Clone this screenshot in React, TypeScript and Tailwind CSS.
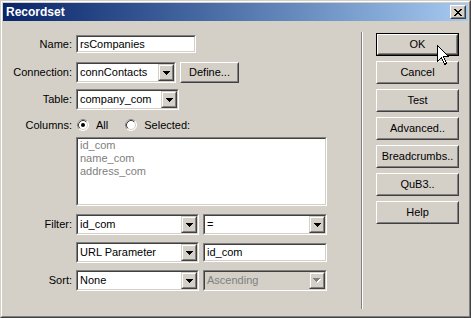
import React from "react";

const FONT = { fontFamily: '"Liberation Sans", Arial, sans-serif' };

function Sunken({ className, innerClass, children }: { className: string; innerClass?: string; children?: React.ReactNode }) {
  return (
    <div className={`border border-t-[#808080] border-l-[#808080] border-r-white border-b-white ${className}`}>
      <div className={`h-full border border-t-[#404040] border-l-[#404040] border-r-[#d4d0c8] border-b-[#d4d0c8] ${innerClass ?? "bg-white"}`}>
        {children}
      </div>
    </div>
  );
}

function Triangle({ color }: { color: string }) {
  return (
    <svg width="7" height="4" viewBox="0 0 7 4" shapeRendering="crispEdges">
      <rect x="0" y="0" width="7" height="1" fill={color} />
      <rect x="1" y="1" width="5" height="1" fill={color} />
      <rect x="2" y="2" width="3" height="1" fill={color} />
      <rect x="3" y="3" width="1" height="1" fill={color} />
    </svg>
  );
}

function ArrowBtn({ disabled }: { disabled?: boolean }) {
  return (
    <div className="w-[16px] h-full shrink-0 border border-t-[#d4d0c8] border-l-[#d4d0c8] border-r-[#404040] border-b-[#404040]">
      <div className="h-full border border-t-white border-l-white border-r-[#808080] border-b-[#808080] bg-[#d4d0c8] flex items-center justify-center">
        {disabled ? (
          <div className="relative w-[8px] h-[5px]">
            <div className="absolute left-[1px] top-[1px]"><Triangle color="#ffffff" /></div>
            <div className="absolute left-0 top-0"><Triangle color="#808080" /></div>
          </div>
        ) : (
          <Triangle color="#000000" />
        )}
      </div>
    </div>
  );
}

function Combo({ className, text, disabled }: { className: string; text: string; disabled?: boolean }) {
  return (
    <Sunken className={`h-[21px] ${className}`} innerClass={disabled ? "bg-[#d4d0c8]" : "bg-white"}>
      <div className="flex h-full items-center">
        <span className={`flex-1 pl-[2px] whitespace-nowrap overflow-hidden ${disabled ? "text-[#808080]" : "text-black"}`}>{text}</span>
        <ArrowBtn disabled={disabled} />
      </div>
    </Sunken>
  );
}

function Raised({ className, children, isDefault }: { className: string; children: React.ReactNode; isDefault?: boolean }) {
  const inner = (
    <div className="h-full border border-t-white border-l-white border-r-[#404040] border-b-[#404040]">
      <div className="h-full border border-t-[#d4d0c8] border-l-[#d4d0c8] border-r-[#808080] border-b-[#808080] bg-[#d4d0c8] flex items-center justify-center text-black">
        {children}
      </div>
    </div>
  );
  if (isDefault) {
    return <div className={`border border-black ${className}`}>{inner}</div>;
  }
  return <div className={className}>{inner}</div>;
}

function Radio({ checked }: { checked?: boolean }) {
  return (
    <svg width="12" height="12" viewBox="0 0 12 12">
      <circle cx="6" cy="6" r="5.5" fill="#ffffff" stroke="#ffffff" />
      <path d="M9.89 2.11 A5.5 5.5 0 0 0 2.11 9.89" stroke="#808080" fill="none" />
      <circle cx="6" cy="6" r="4.5" fill="#ffffff" stroke="#d4d0c8" />
      <path d="M9.18 2.82 A4.5 4.5 0 0 0 2.82 9.18" stroke="#404040" fill="none" />
      {checked && <circle cx="6" cy="6" r="2" fill="#000000" />}
    </svg>
  );
}

function Label({ text }: { text: string }) {
  return <div className="w-[73px] shrink-0 text-right pr-[4px] whitespace-nowrap">{text}</div>;
}

function CloseX() {
  const r = [
    [0, 0, 2], [6, 0, 2],
    [1, 1, 2], [5, 1, 2],
    [2, 2, 4],
    [3, 3, 2],
    [2, 4, 4],
    [1, 5, 2], [5, 5, 2],
    [0, 6, 2], [6, 6, 2],
  ];
  return (
    <svg width="8" height="7" viewBox="0 0 8 7" shapeRendering="crispEdges">
      {r.map(([x, y, w], i) => (
        <rect key={i} x={x} y={y} width={w} height="1" fill="#000" />
      ))}
    </svg>
  );
}

export default function App() {
  const buttons = ["Cancel", "Test", "Advanced..", "Breadcrumbs..", "QuB3..", "Help"];
  return (
    <div style={FONT} className="relative w-[471px] h-[318px] text-[11px] leading-[13px] text-black select-none">
      <div className="h-full border border-t-[#d4d0c8] border-l-[#d4d0c8] border-r-[#404040] border-b-[#404040]">
        <div className="h-full border border-t-white border-l-white border-r-[#808080] border-b-[#808080] bg-[#d4d0c8] p-[1px] flex flex-col">
          {/* Title bar */}
          <div className="h-[18px] shrink-0 flex items-center justify-between bg-gradient-to-r from-[#0a246a] to-[#a6caf0] pl-[3px] pr-[2px]">
            <span className="text-white font-bold text-[12px]">Recordset</span>
            <Raised className="w-[16px] h-[14px]">
              <CloseX />
            </Raised>
          </div>

          {/* Body */}
          <div className="flex flex-1">
            {/* Left panel */}
            <div className="w-[358px] shrink-0 flex flex-col">
              <div className="mt-[14px] h-[18px] flex items-center">
                <Label text="Name:" />
                <Sunken className="w-[120px] h-[18px]">
                  <div className="h-full flex items-center pl-[2px]">rsCompanies</div>
                </Sunken>
              </div>

              <div className="mt-[9px] h-[21px] flex items-center">
                <Label text="Connection:" />
                <Combo className="w-[100px]" text="connContacts" />
                <Raised className="ml-[4px] w-[59px] h-[21px]">Define...</Raised>
              </div>

              <div className="mt-[6px] h-[21px] flex items-center">
                <Label text="Table:" />
                <Combo className="w-[103px]" text="company_com" />
              </div>

              <div className="mt-[8px] h-[14px] flex items-center">
                <Label text="Columns:" />
                <div className="ml-[1px] flex items-center">
                  <Radio checked />
                </div>
                <span className="ml-[7px]">All</span>
                <div className="ml-[17px] flex items-center">
                  <Radio />
                </div>
                <span className="ml-[7px]">Selected:</span>
              </div>

              <div className="mt-[5px] flex">
                <div className="w-[73px] shrink-0" />
                <Sunken className="w-[251px] h-[69px]">
                  <div className="pl-[2px] text-[#808080] leading-[13px]">
                    <div>id_com</div>
                    <div>name_com</div>
                    <div>address_com</div>
                  </div>
                </Sunken>
              </div>

              <div className="mt-[8px] h-[21px] flex items-center">
                <Label text="Filter:" />
                <Combo className="w-[123px]" text="id_com" />
                <Combo className="ml-[4px] w-[124px]" text="=" />
              </div>

              <div className="mt-[7px] h-[21px] flex items-center">
                <Label text="" />
                <Combo className="w-[123px]" text="URL Parameter" />
                <Sunken className="ml-[4px] w-[124px] h-[19px]">
                  <div className="h-full flex items-center pl-[2px]">id_com</div>
                </Sunken>
              </div>

              <div className="mt-[7px] h-[21px] flex items-center">
                <Label text="Sort:" />
                <Combo className="w-[123px]" text="None" />
                <Combo className="ml-[4px] w-[124px]" text="Ascending" disabled />
              </div>
            </div>

            {/* Separator */}
            <div className="mt-[11px] mb-[6px] w-[2px] border-l border-l-[#808080] border-r border-r-white" />

            {/* Right panel */}
            <div className="pl-[13px] pt-[12px] flex flex-col gap-[5px]">
              <Raised isDefault className="w-[83px] h-[23px]">OK</Raised>
              {buttons.map((b) => (
                <Raised key={b} className="w-[83px] h-[23px]">{b}</Raised>
              ))}
            </div>
          </div>
        </div>
      </div>

      {/* Mouse cursor */}
      <svg className="absolute left-[437px] top-[45px]" width="13" height="21" viewBox="0 0 13 21" shapeRendering="crispEdges">
        <path d="M0.5 0.5 L0.5 16.5 L4.5 12.5 L7.5 19.5 L9.5 18.5 L6.5 11.5 L11.5 11.5 Z" fill="#ffffff" stroke="#000000" strokeWidth="1" />
      </svg>
    </div>
  );
}
